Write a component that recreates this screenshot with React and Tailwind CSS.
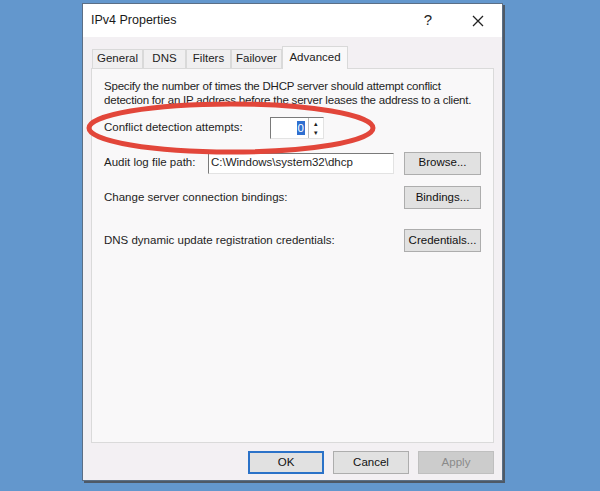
import React from "react";

const font = { fontFamily: '"Liberation Sans", Arial, sans-serif' };

function Btn({ children, className = "", disabled = false, primary = false }) {
  return (
    <div
      className={
        "flex items-center justify-center h-[23px] text-[11.5px] " +
        (disabled
          ? "bg-[#cccccc] border border-[#bfbfbf] text-[#8a8a8a] "
          : primary
          ? "bg-[#e1e1e1] border-2 border-[#2b72c8] text-[#111] "
          : "bg-[#e1e1e1] border border-[#adadad] text-[#111] ") +
        className
      }
    >
      {children}
    </div>
  );
}

function Tab({ children, active = false, w }) {
  return (
    <div
      className={
        "flex items-center justify-center text-[11.5px] text-[#222] border border-[#d9d9d9] border-b-0 " +
        (active
          ? "bg-[#f9f8f9] h-[23px] -mb-px z-10 relative px-0"
          : "bg-[#f0eff0] h-[19px]") +
        " " +
        w
      }
    >
      {children}
    </div>
  );
}

export default function App() {
  return (
    <div
      className="w-[600px] h-[491px] bg-[#6397cd] pl-[82px] pt-[3px] relative overflow-hidden"
      style={font}
    >
      <div className="w-[421px] h-[478px] bg-[#f3f0f3] border border-[#5b6f86] shadow-[2px_2px_0_#4e5966] flex flex-col">
        {/* title bar */}
        <div className="h-[33px] bg-white flex items-center pl-[8px] pr-[18px] shrink-0">
          <span className="text-[12.5px] text-[#1a1a1a]">IPv4 Properties</span>
          <span className="ml-auto text-[15px] text-[#222] mr-[40px]">?</span>
          <svg width="12" height="12" viewBox="0 0 12 12">
            <path d="M1 1 L11 11 M11 1 L1 11" stroke="#222" strokeWidth="1.3" />
          </svg>
        </div>
        {/* tabs */}
        <div className="flex items-end pl-[9px] pt-[6px] h-[31px] shrink-0">
          <Tab w="w-[51px]">General</Tab>
          <Tab w="w-[43px]">DNS</Tab>
          <Tab w="w-[45px]">Filters</Tab>
          <Tab w="w-[51px]">Failover</Tab>
          <Tab w="w-[66px]" active>
            Advanced
          </Tab>
        </div>
        {/* panel */}
        <div className="mx-[8px] h-[375px] bg-[#f9f8f9] border border-[#dadada] px-[12px] pt-[10px] text-[11.5px] text-[#1e1e1e] shrink-0 whitespace-nowrap">
          <p className="leading-[14px] tracking-[-0.2px]">
            Specify the number of times the DHCP server should attempt conflict
            <br />
            detection for an IP address before the server leases the address to a client.
          </p>
          <div className="flex items-center mt-[10px] h-[22px]">
            <span className="w-[166px]">Conflict detection attempts:</span>
            <div className="w-[54px] h-[22px] bg-white border border-[#7a7a7a] border-r-[#e3e3e3] border-b-[#e3e3e3] flex items-center">
              <span className="ml-auto mr-[3px] bg-[#2f6fd0] text-white leading-[14px] px-px">0</span>
              <div className="w-[15px] h-full border-l border-[#bcbcbc] flex flex-col text-[7px] leading-[9px] items-center justify-center">
                <span>▴</span>
                <span>▾</span>
              </div>
            </div>
          </div>
          <div className="flex items-center mt-[13px] h-[22px]">
            <span className="w-[104px]">Audit log file path:</span>
            <div className="w-[186px] h-[21px] bg-white border border-[#7a7a7a] border-r-[#e3e3e3] border-b-[#e3e3e3] flex items-center pl-[2px]">
              C:\Windows\system32\dhcp
            </div>
            <Btn className="ml-auto w-[77px]">Browse...</Btn>
          </div>
          <div className="flex items-center mt-[12px] h-[23px]">
            <span>Change server connection bindings:</span>
            <Btn className="ml-auto w-[77px]">Bindings...</Btn>
          </div>
          <div className="flex items-center mt-[20px] h-[23px]">
            <span>DNS dynamic update registration credentials:</span>
            <Btn className="ml-auto w-[77px]">Credentials...</Btn>
          </div>
        </div>
        {/* bottom buttons */}
        <div className="flex justify-end gap-[9px] pr-[8px] mt-[8px]">
          <Btn primary className="w-[76px]">OK</Btn>
          <Btn className="w-[76px]">Cancel</Btn>
          <Btn disabled className="w-[76px]">Apply</Btn>
        </div>
      </div>
      {/* red annotation ellipse */}
      <svg
        className="absolute left-[84px] top-[99px] pointer-events-none"
        width="294"
        height="58"
        viewBox="0 0 294 58"
      >
        <ellipse cx="147" cy="29" rx="142" ry="24" fill="none" stroke="#e2463a" strokeWidth="5" />
      </svg>
    </div>
  );
}
